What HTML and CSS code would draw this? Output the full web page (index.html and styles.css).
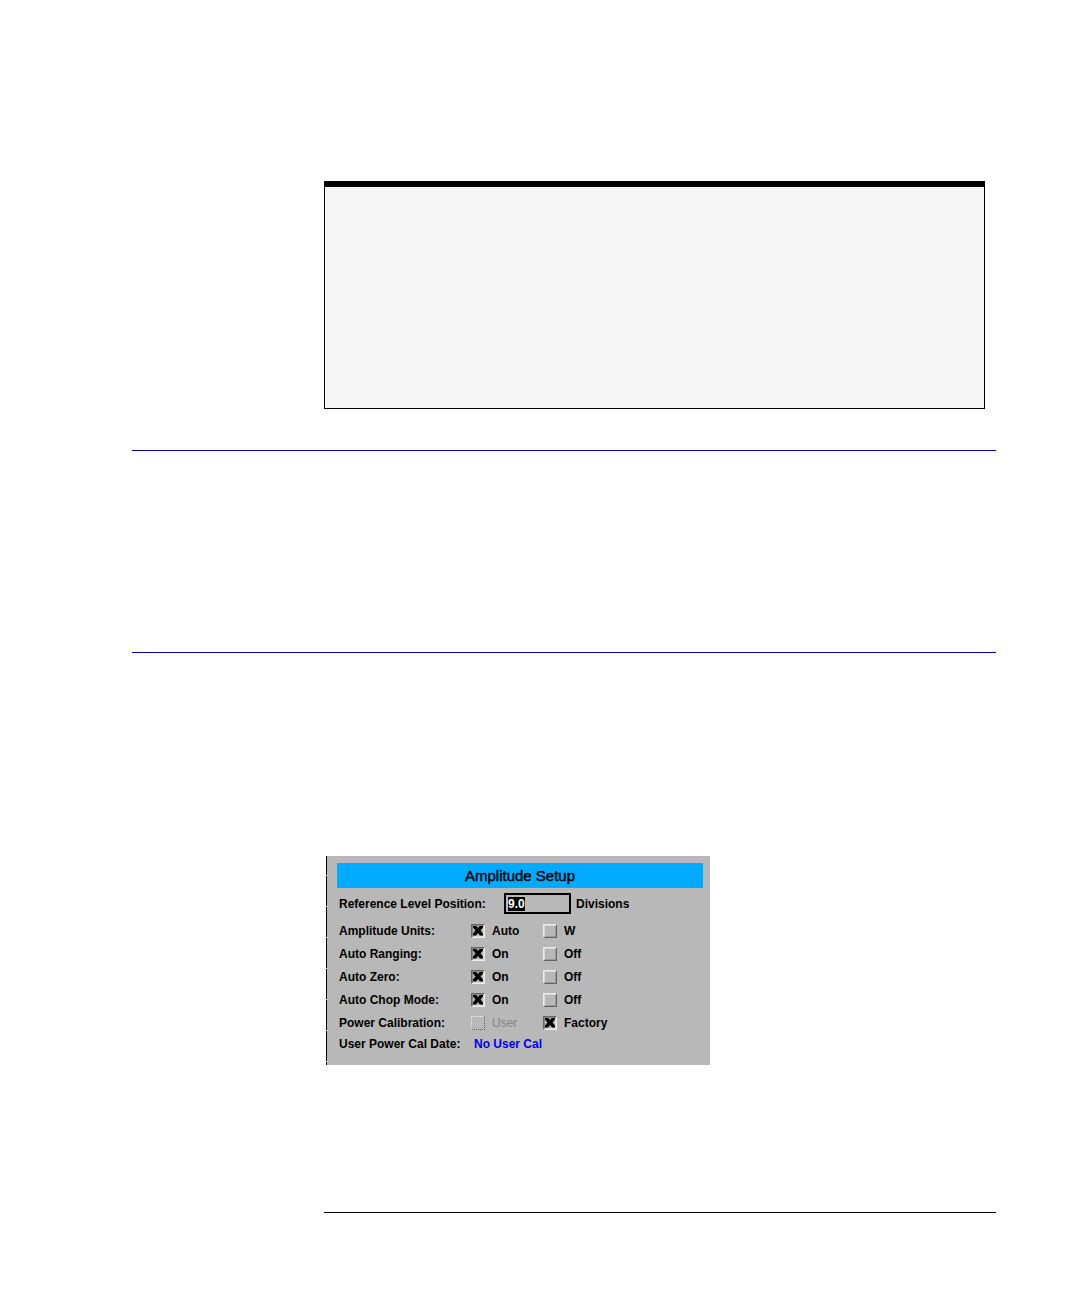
FILE: index.html
```html
<!DOCTYPE html>
<html lang="en">
<head>
<meta charset="utf-8">
<title>Amplitude Setup</title>
<link rel="stylesheet" href="styles.css">
</head>
<body>
<main class="page">
  <section class="note column"></section>
  <section class="section"></section>
  <section class="section section-main">
    <form class="panel">
      <h1 class="panel-title">Amplitude Setup</h1>
      <div class="row row-level">
        <label for="level">Reference Level Position:</label>
        <input class="level" id="level" type="text" value="9.0">
        <span>Divisions</span>
      </div>
      <div class="row" role="radiogroup" aria-labelledby="units">
        <span id="units">Amplitude Units:</span>
        <label class="option"><input type="radio" name="units" checked>Auto</label>
        <label class="option"><input type="radio" name="units">W</label>
      </div>
      <div class="row" role="radiogroup" aria-labelledby="ranging">
        <span id="ranging">Auto Ranging:</span>
        <label class="option"><input type="radio" name="ranging" checked>On</label>
        <label class="option"><input type="radio" name="ranging">Off</label>
      </div>
      <div class="row" role="radiogroup" aria-labelledby="zero">
        <span id="zero">Auto Zero:</span>
        <label class="option"><input type="radio" name="zero" checked>On</label>
        <label class="option"><input type="radio" name="zero">Off</label>
      </div>
      <div class="row" role="radiogroup" aria-labelledby="chop">
        <span id="chop">Auto Chop Mode:</span>
        <label class="option"><input type="radio" name="chop" checked>On</label>
        <label class="option"><input type="radio" name="chop">Off</label>
      </div>
      <div class="row" role="radiogroup" aria-labelledby="calibration">
        <span id="calibration">Power Calibration:</span>
        <label class="option disabled"><input type="radio" name="calibration" disabled>User</label>
        <label class="option"><input type="radio" name="calibration" checked>Factory</label>
      </div>
      <div class="row row-date">
        <span>User Power Cal Date:</span>
        <output class="date">No User Cal</output>
      </div>
    </form>
  </section>
  <footer class="column footer"></footer>
</main>
<script src="script.js"></script>
</body>
</html>
```
FILE: styles.css
```css
* {
  box-sizing: border-box;
}

body {
  margin: 0;
  background: #fff;
  color: #000;
  font: bold 12px/16px "Liberation Sans", Arial, sans-serif;
}

.page {
  padding: 181px 84px 83px 132px;
}

.column {
  margin-left: 192px;
}

.note {
  min-height: 228px;
  margin-right: 11px;
  margin-bottom: 41px;
  border: 1px solid #000;
  border-top-width: 6px;
  background: #f6f6f6;
}

.section {
  min-height: 202px;
  border-top: 1px solid #0000a8;
}

.section-main {
  padding: 203px 0 147px 194px;
}

.footer {
  border-top: 1px solid #000;
}

.panel {
  max-width: 384px;
  padding: 7px 7px 12px 11px;
  background:
    repeating-linear-gradient(#000 0 19px, #ddd 19px 20px, #000 20px 31px) left / 1px 100% no-repeat,
    #b8b8b8;
}

.panel-title {
  margin: 0 0 3px;
  background: #00aaff;
  font: 15px/25px "Liberation Sans", Arial, sans-serif;
  -webkit-text-stroke: 0.4px #000;
  text-align: center;
}

.row {
  display: grid;
  grid-template-columns: 132px 72px 1fr;
  align-items: center;
  height: 23px;
  padding-left: 2px;
}

.row-level {
  grid-template-columns: 165px 67px 1fr;
  height: 25px;
  margin-bottom: 3px;
}

.row-level span {
  padding-left: 5px;
}

.row-date {
  grid-template-columns: 135px 1fr;
  height: 19px;
}

.level {
  width: 67px;
  height: 21px;
  margin: 0;
  padding: 1px 2px;
  border: 2px solid #000;
  border-radius: 0;
  outline: 0;
  background: #b8b8b8;
  color: #000;
  font: bold 12px/14px "Liberation Sans", Arial, sans-serif;
}

.level::selection {
  background: #000;
  color: #fff;
}

.option {
  display: flex;
  align-items: center;
  gap: 7px;
}

.option input {
  display: grid;
  place-items: center;
  flex: none;
  width: 14px;
  height: 14px;
  margin: 0;
  appearance: none;
  border: 1px solid;
  border-color: #ececec #666 #666 #ececec;
  background: #b8b8b8;
  box-shadow: inset 1px 1px #d8d8d8, inset -1px -1px #999;
}

.option input:checked {
  border-color: #666 #ececec #ececec #666;
  box-shadow: inset 1px 1px #888, inset -1px -1px #d8d8d8;
}

.option input:checked::before {
  width: 10px;
  height: 10px;
  background: #000;
  clip-path: polygon(0 0, 30% 0, 50% 25%, 70% 0, 100% 0, 100% 20%, 75% 50%, 100% 80%, 100% 100%, 70% 100%, 50% 75%, 30% 100%, 0 100%, 0 80%, 25% 50%, 0 20%);
  content: "";
}

.option input:disabled {
  border-style: dotted;
  border-color: #ececec #666 #666 #ececec;
  box-shadow: none;
}

.disabled {
  color: #858585;
  font-weight: normal;
}

.date {
  color: #0000ee;
}
```
FILE: script.js
```js
// Start with the reference level ready to be typed over.
const level = document.getElementById("level");
level.focus({ preventScroll: true });
level.select();
```
